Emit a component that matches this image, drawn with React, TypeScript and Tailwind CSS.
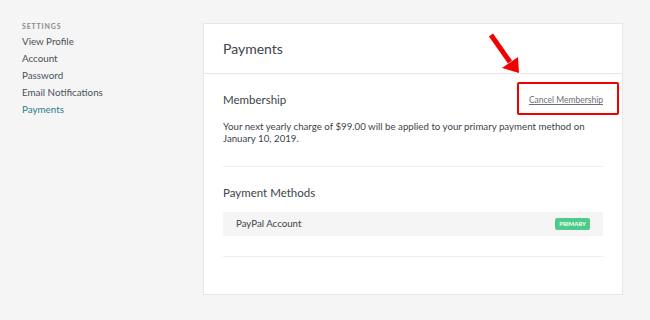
export default function App() {
  const font = { fontFamily: '"Lato", "Open Sans", sans-serif' };
  return (
    <div className="w-[650px] h-[320px] bg-[#f5f5f5] flex pl-[22px] pt-[23px] overflow-hidden" style={font}>
      <div className="w-[181px] shrink-0 flex flex-col">
        <div className="text-[7px] font-bold tracking-[0.12em] text-[#8a8a8a] leading-[9px] mt-[-1px]">SETTINGS</div>
        <div className="flex flex-col text-[9.8px] text-[#4a5058] leading-[17px] mt-[2px]">
          <span>View Profile</span>
          <span>Account</span>
          <span>Password</span>
          <span>Email Notifications</span>
          <span className="text-[#2a7d8c]">Payments</span>
        </div>
      </div>
      <div className="w-[420px] h-[272px] bg-white border border-[#e6e6e6] flex flex-col">
        <div className="h-[50px] shrink-0 border-b border-[#e6e6e6] flex items-center px-[19px]">
          <span className="text-[14px] text-[#3d434a]">Payments</span>
        </div>
        <div className="px-[19px] flex flex-col">
          <div className="flex items-center justify-between mt-[18px] h-[16px]">
            <span className="text-[11.5px] text-[#3d434a]">Membership</span>
            <span className="relative text-[8.5px] leading-[10px] text-[#6b6f75] underline">
              Cancel Membership
              <span className="absolute left-[-12px] right-[-16px] top-[-13px] bottom-[-10px] border-2 border-[#f00000] rounded-[2px]"></span>
              <svg className="absolute left-[-42px] top-[-63px]" width="36" height="44" viewBox="0 0 36 44">
                <line x1="4" y1="3" x2="23" y2="30" stroke="#f00000" strokeWidth="5" />
                <polygon points="15,36 31,25 32,41" fill="#f00000" />
              </svg>
            </span>
          </div>
          <p className="text-[9.7px] leading-[12.3px] text-[#3d434a] mt-[12px]">
            Your next yearly charge of $99.00 will be applied to your primary payment method on January 10, 2019.
          </p>
          <div className="border-b border-[#eeeeee] mt-[21px]"></div>
          <div className="text-[11.5px] text-[#3d434a] mt-[18px] leading-[16px]">Payment Methods</div>
          <div className="h-[24px] bg-[#f5f5f5] mt-[11px] flex items-center justify-between pl-[13px] pr-[13px]">
            <span className="text-[9.7px] text-[#3d434a]">PayPal Account</span>
            <span className="bg-[#4ccb8b] text-white text-[6px] font-bold px-[4px] h-[12px] flex items-center rounded-[2px]">PRIMARY</span>
          </div>
          <div className="border-b border-[#eeeeee] mt-[20px]"></div>
        </div>
      </div>
    </div>
  );
}
